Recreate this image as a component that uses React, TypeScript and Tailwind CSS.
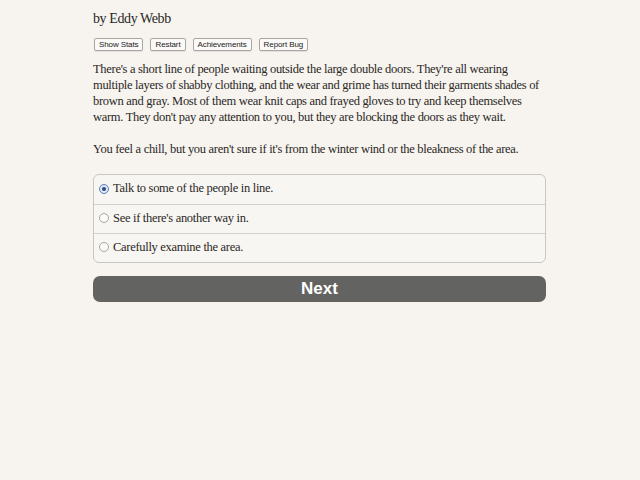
import { useState } from "react";

const OPTIONS = [
  "Talk to some of the people in line.",
  "See if there's another way in.",
  "Carefully examine the area.",
];

const TOOLBAR = ["Show Stats", "Restart", "Achievements", "Report Bug"];

// the story text is typeset line by line so it wraps like the game does
const PASSAGE = [
  "There's a short line of people waiting outside the large double doors. They're all wearing",
  "multiple layers of shabby clothing, and the wear and grime has turned their garments shades of",
  "brown and gray. Most of them wear knit caps and frayed gloves to try and keep themselves",
  "warm. They don't pay any attention to you, but they are blocking the doors as they wait.",
];

export default function App() {
  const [choice, setChoice] = useState(0);

  return (
    <div className="min-h-screen w-full bg-[#f7f4f0] text-[#2a2724] font-['Liberation_Serif',serif]">
      <div className="ml-[93px] w-[453px] pt-[10px]">
        <div className="text-[14px] leading-[18px] tracking-[-0.4px]">by Eddy Webb</div>

        {/* game menu */}
        <div className="mt-[10px] flex gap-[7px] pl-px">
          {TOOLBAR.map((label) => (
            <button
              key={label}
              className="h-[13px] rounded-[2px] border border-[#a9a6a2] bg-[#fbfaf8] px-[4px] font-['Liberation_Sans',sans-serif] text-[8px] leading-[11px] tracking-[-0.1px] text-[#222] shadow-[0_1px_0_rgba(0,0,0,0.08)]"
            >
              {label}
            </button>
          ))}
        </div>

        <p className="mt-[10px] text-[12.5px] leading-[16px] tracking-[-0.3px]">
          {PASSAGE.map((line) => (
            <span key={line} className="block whitespace-nowrap">
              {line}
            </span>
          ))}
        </p>
        <p className="mt-[16px] whitespace-nowrap text-[12.5px] leading-[16px] tracking-[-0.3px]">
          You feel a chill, but you aren't sure if it's from the winter wind or the bleakness of the area.
        </p>

        {/* choices */}
        <div className="mt-[17px] rounded-[6px] border border-[#c9c6c2] bg-[#f8f6f3]">
          {OPTIONS.map((text, i) => (
            <label
              key={text}
              onClick={() => setChoice(i)}
              className={`flex h-[29px] items-center gap-[4px] pb-[2px] pl-[5px] text-[12.5px] tracking-[-0.3px] ${
                i > 0 ? "border-t border-[#d3d0cc]" : ""
              }`}
            >
              <span
                className={`flex h-[10px] w-[10px] items-center justify-center rounded-full border ${
                  choice === i
                    ? "border-[#5b7fb6] bg-[#dfe9f7]"
                    : "border-[#a8a6a3] bg-[#fcfbfa]"
                }`}
              >
                {choice === i && <span className="h-[4px] w-[4px] rounded-full bg-[#2a4a80]" />}
              </span>
              <span>{text}</span>
            </label>
          ))}
        </div>

        <button className="mt-[13px] h-[26px] w-full rounded-[7px] bg-[#636361] font-['Liberation_Sans',sans-serif] text-[17px] font-bold leading-[26px] text-white">
          Next
        </button>
      </div>
    </div>
  );
}
